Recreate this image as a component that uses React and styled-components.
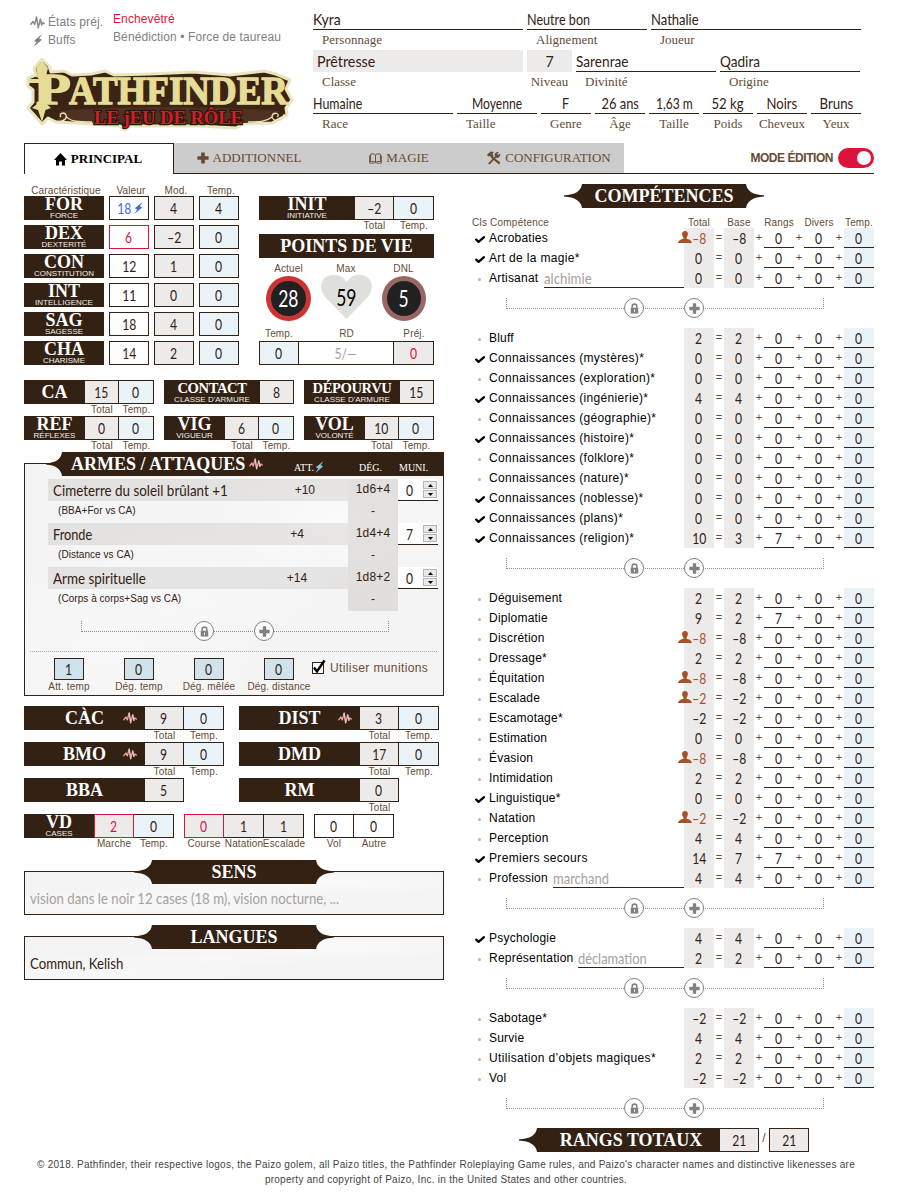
import React, { useLayoutEffect, useRef } from 'react';
import styled, { createGlobalStyle, css } from 'styled-components';

const INK = '#332113';
const LABEL = '#664b35';
const GREY = '#edebea';
const BLUE = '#eaf3f7';
const RED = '#dc143c';
const SANS = '"Liberation Sans", Arial, sans-serif';
const SERIF = '"Liberation Serif", "Times New Roman", serif';
const HAND = 'Lato, "Open Sans", sans-serif';

const Global = createGlobalStyle`
  *, *::before, *::after { box-sizing: border-box; }
  body { margin: 0; background: #fff; color: ${INK}; font-family: ${SANS}; font-size: 12px; }
`;

/* ---------- text squeezed to a given width ---------- */
const FitSpan = styled.span`
  display: inline-block;
  white-space: pre;
  flex: none;
  transform-origin: ${p => p.$origin} center;
`;
function Fit({ w, origin = 'left', children }) {
  const ref = useRef(null);
  useLayoutEffect(() => {
    const el = ref.current;
    if (el && el.offsetWidth) el.style.transform = `scaleX(${w / el.offsetWidth})`;
  }, [w, children]);
  return <FitSpan ref={ref} $origin={origin}>{children}</FitSpan>;
}

const Num = styled.span`
  display: inline-block;
  font-family: ${HAND};
  font-size: ${p => p.$size || 16}px;
  line-height: 1;
  white-space: nowrap;
  transform: scaleX(0.76);
  color: ${p => p.$color || 'inherit'};
`;

/* ---------- icons ---------- */
const Icon = styled.svg`
  display: block;
  flex: none;
  overflow: visible;
`;
const Pulse = ({ w = 15, h = 13, color = '#8a8a8a' }) => (
  <Icon width={w} height={h} viewBox="0 0 15 13" fill="none" stroke={color} strokeWidth="1.5" strokeLinejoin="round" strokeLinecap="round">
    <path d="M.8 8.3 L3 5.5 L4.6 8.5 L6.6 1 L8.2 11.8 L10.5 3 L11.7 9 L12.8 6.5 L14.3 7.6" />
  </Icon>
);
const PulsePink = () => (
  <Icon width="14" height="12" viewBox="0 0 15 13" fill="none" strokeLinejoin="round" strokeLinecap="round">
    <path d="M.8 8.3 L3 5.5 L4.6 8.5 L6.6 1 L8.2 11.8 L10.5 3 L11.7 9 L12.8 6.5 L14.3 7.6" stroke="#f0a594" strokeWidth="1.5" />
    <path d="M6.6 1.5 L8.2 11.2 M10.5 3.5 L11.7 9" stroke="#d5c4f2" strokeWidth="1" />
  </Icon>
);
const Bolt = ({ color, s = 12 }) => (
  <Icon width={s * 0.75} height={s} viewBox="0 0 9 13" fill={color}>
    <path d="M8.8 0 L1 6.6 L3.8 6.9 L0 13 L8 6.2 L5.2 5.6 Z" />
    <path d="M0.6 6.9 L5 4.3 L8.6 5.6 L4 8.4 Z" />
  </Icon>
);
const Home = () => (
  <Icon width="13" height="13" viewBox="0 0 13 13" fill="#000">
    <path d="M6.5 0 L13 7 H11 V12.6 H7.9 V8.6 H5.1 V12.6 H2 V7 H0 Z" />
  </Icon>
);
const PlusMark = ({ s = 12, color }) => (
  <Icon width={s} height={s} viewBox="0 0 12 12" fill={color}>
    <path d="M4.2 .4 H7.8 V4.2 H11.6 V7.8 H7.8 V11.6 H4.2 V7.8 H.4 V4.2 H4.2 Z" />
  </Icon>
);
const Book = () => (
  <Icon width="13" height="11" viewBox="0 0 13 11" fill="none" stroke={LABEL} strokeWidth="1">
    <path d="M6.5 2 C5 .6 2.8 .6 1.6 1.2 V8.8 C3 8.2 5 8.4 6.5 9.6 C8 8.4 10 8.2 11.4 8.8 V1.2 C10.2 .6 8 .6 6.5 2 Z M6.5 2 V9.6" />
    <path d="M.5 2.5 V10.2 H5.6 M12.5 2.5 V10.2 H7.4" strokeWidth=".8" />
  </Icon>
);
const Tools = () => (
  <Icon width="14" height="14" viewBox="0 0 14 14" fill={LABEL}>
    <path d="M1 12.6 L8.2 5 L9.4 6.2 L2.6 13.6 Z" />
    <path d="M7.4 3.6 C8 1.4 10 .6 12 1 L10.2 3 L11.2 4 L13.2 2.4 C13.8 5 11.6 7.4 9.2 6.8 Z" />
    <path d="M5.4 5.4 L13.4 11.6 L12 13.4 L4.2 6.8 Z" />
    <path d="M0 3.8 L3.6 .4 L7 1 L5.4 2.4 L6.6 5 L4.4 7.4 L3.2 5 L1.4 5.6 Z" />
  </Icon>
);
const Person = () => (
  <Icon width="14" height="12" viewBox="0 0 14 12" fill="#a5522a">
    <path d="M7 0 C9 0 10.1 1.3 9.9 3.3 C9.8 4.9 9 6 8.5 6.5 V7.8 C10.6 8.5 13.6 9 13.9 12 H.1 C.4 9 3.4 8.5 5.5 7.8 V6.5 C5 6 4.2 4.9 4.1 3.3 C3.9 1.3 5 0 7 0 Z" />
  </Icon>
);
const Check = () => (
  <Icon width="10" height="8" viewBox="0 0 10 8" fill="none" stroke="#000" strokeWidth="2.3" strokeLinecap="round" strokeLinejoin="round">
    <path d="M1.2 4.6 L3.6 6.8 L9 2.2" />
  </Icon>
);
const Lock = () => (
  <Icon width="9" height="11" viewBox="0 0 10 12">
    <path d="M2.4 6 V3.4 C2.4 .4 7.6 .4 7.6 3.4 V6" fill="none" stroke="#808080" strokeWidth="1.7" />
    <path d="M.8 5.2 H9.2 V11.6 H.8 Z" fill="#808080" />
    <path d="M4.5 7 H5.5 V10 H4.5 Z" fill="#fff" />
  </Icon>
);
const Heart = styled.svg`
  display: block;
  grid-area: 1 / 1;
`;

/* ---------- header ---------- */
const Sheet = styled.main`
  width: 900px;
  height: 1200px;
  padding: 8px 26px 0 24px;
  overflow: hidden;
`;
const Header = styled.header`
  display: flex;
  height: 135px;
`;
const Brand = styled.div`
  width: 289px;
  flex: none;
`;
const Status = styled.div`
  display: flex;
  height: 44px;
  padding: 2px 0 0 6px;
  color: #808080;
`;
const StatusKeys = styled.div`
  width: 83px;
  padding-top: 3px;
`;
const StatusKey = styled.div`
  display: flex;
  align-items: center;
  gap: 3px;
  height: 18px;
  letter-spacing: 0.1px;
`;
const KeyIcon = styled.span`
  display: flex;
  justify-content: center;
  width: 15px;
`;
const StatusLine = styled.div`
  height: 18px;
  line-height: 18px;
  white-space: nowrap;
  letter-spacing: 0.1px;
  color: ${p => (p.$bad ? RED : '#808080')};
`;
const Logo = styled.svg`
  display: block;
  margin: 4px 0 0 0;
  overflow: visible;
`;
const LogoLetters = styled.g`
  font-family: ${SERIF};
  font-weight: bold;
  fill: #e5dc96;
  stroke: #e5dc96;
  stroke-width: 1.3px;
`;
const LogoSubtitle = styled.text`
  font-family: ${SERIF};
  font-weight: bold;
  font-size: 19px;
  fill: #cf2027;
  stroke: #2b150c;
  stroke-width: 2.4px;
  paint-order: stroke;
`;

const Identity = styled.div`
  flex: 1;
`;
const FieldRow = styled.div`
  display: flex;
  gap: 4px;
  height: 42px;
`;
const Field = styled.div`
  width: ${p => p.$w}px;
  flex: none;
  text-align: ${p => (p.$center ? 'center' : 'left')};
`;
const FieldValue = styled.div`
  display: flex;
  align-items: center;
  justify-content: ${p => (p.$center ? 'center' : 'flex-start')};
  height: 22px;
  padding: 1px 0 0 ${p => (p.$filled && !p.$center ? 4 : 0)}px;
  font-family: ${HAND};
  font-size: 16px;
  line-height: 20px;
  white-space: nowrap;
  ${p => (p.$filled
    ? css`background: ${GREY}; padding-top: 0; padding-bottom: 1px;`
    : css`border-bottom: 1px solid ${INK};`)}
`;
const FieldLabel = styled.div`
  height: 20px;
  line-height: 20px;
  padding-left: ${p => (p.$center ? 0 : 9)}px;
  font-family: ${SERIF};
  font-size: 13px;
  color: ${LABEL};
`;

/* ---------- tabs ---------- */
const TabBar = styled.nav`
  display: flex;
  height: 31px;
  border-bottom: 1px solid ${INK};
`;
const Tab = styled.div`
  display: flex;
  align-items: center;
  justify-content: center;
  gap: 4px;
  width: 150px;
  height: 31px;
  font-family: ${SERIF};
  font-size: 13px;
  ${p => (p.$active
    ? css`background: #fff; color: #000; font-weight: bold; border: 1px solid ${INK}; border-bottom: 0; padding-right: 2px;`
    : css`background: #ccc; color: ${LABEL}; border-bottom: 1px solid ${INK};`)}
`;
const EditMode = styled.div`
  display: flex;
  align-items: center;
  gap: 5px;
  height: 30px;
  margin-left: auto;
  font-size: 12px;
  font-weight: bold;
  letter-spacing: -0.45px;
  color: ${LABEL};
`;
const Toggle = styled.span`
  display: flex;
  justify-content: flex-end;
  width: 36px;
  height: 20px;
  padding: 3px;
  border-radius: 10px;
  background: ${RED};
`;
const Knob = styled.span`
  width: 14px;
  height: 14px;
  border-radius: 50%;
  background: #fff;
`;

/* ---------- boxes ---------- */
const Columns = styled.div`
  display: flex;
  height: 978px;
`;
const LeftCol = styled.div`
  width: 420px;
  flex: none;
`;
const Caption = styled.div`
  width: ${p => p.$w}px;
  flex: none;
  height: 12px;
  line-height: 12px;
  display: flex;
  justify-content: center;
  font-size: 10px;
  letter-spacing: 0.15px;
  white-space: nowrap;
  color: ${LABEL};
`;
const Cell = styled.div`
  display: flex;
  align-items: center;
  justify-content: center;
  width: ${p => p.$w}px;
  height: 24px;
  flex: none;
  border: 1px solid ${p => (p.$bad ? RED : INK)};
  border-left-width: ${p => (p.$first || p.$bad ? 1 : 0)}px;
  background: ${p => ({ grey: GREY, blue: BLUE })[p.$tone] || '#fff'};
  color: ${p => (p.$bad || p.$red ? RED : p.$dim ? '#a8a19c' : INK)};
`;
const Title = styled.div`
  position: relative;
  display: flex;
  flex-direction: column;
  align-items: center;
  justify-content: ${p => (p.$sub ? 'flex-start' : 'center')};
  flex: ${p => (p.$w ? 'none' : 1)};
  width: ${p => (p.$w ? `${p.$w}px` : 'auto')};
  height: 24px;
  padding-left: ${p => p.$shift || 0}px;
  background: ${INK};
  color: #fff;
  font-family: ${SERIF};
  font-weight: bold;
  font-size: ${p => p.$size || 18}px;
  letter-spacing: ${p => (p.$size ? -0.4 : 0)}px;
  line-height: ${p => (p.$sub ? 16 : 24)}px;
  white-space: nowrap;
`;
const Sub = styled.span`
  font: 8px/7px ${SANS};
  letter-spacing: 0;
  color: #eee;
`;
const TitlePulse = styled.span`
  position: absolute;
  right: 8px;
  top: 6px;
`;
const Line = styled.div`
  display: flex;
`;
const StatBox = styled.div`
  width: ${p => p.$w}px;
  flex: none;
`;
const Captions = styled.div`
  display: flex;
  justify-content: flex-end;
  height: 12px;
`;
const StatRow = styled.div`
  display: flex;
  gap: ${p => p.$gap}px;
  height: 36px;
`;

function Stat({ w, title, sub, size, pulse, cells, first }) {
  return (
    <StatBox $w={w}>
      <Line>
        {title && (
          <Title $sub={sub} $size={size}>
            {title}
            {sub && <Sub>{sub}</Sub>}
            {pulse && <TitlePulse><PulsePink /></TitlePulse>}
          </Title>
        )}
        {cells.map((c, i) => (
          <Cell key={i} $w={c.w} $tone={c.tone} $bad={c.bad} $first={first && i === 0}>
            <Num>{c.v}</Num>
          </Cell>
        ))}
      </Line>
      <Captions>
        {cells.map((c, i) => <Caption key={i} $w={c.w}>{c.label}</Caption>)}
      </Captions>
    </StatBox>
  );
}

/* ---------- abilities and hit points ---------- */
const TopBlock = styled.div`
  display: flex;
  gap: 20px;
  height: 206px;
  padding-top: 10px;
`;
const Abilities = styled.div`
  width: 215px;
`;
const AbilityRow = styled.div`
  display: flex;
  gap: 5px;
  height: ${p => (p.$head ? 12 : 29)}px;
  ${p => p.$head && css`padding: 1px 0 0 2px;`}
`;
const Vitals = styled.div`
  width: 175px;
  padding-top: 12px;
`;
const HpTitle = styled(Title)`
  margin-top: 2px;
`;
const HpCaptions = styled.div`
  display: flex;
  justify-content: space-between;
  padding: ${p => p.$pad};
`;
const Gauges = styled.div`
  display: flex;
  gap: 10px;
  height: 51px;
  padding: 0 8px 0 7px;
`;
const Disc = styled.div`
  display: flex;
  align-items: center;
  justify-content: center;
  width: 45px;
  height: 45px;
  margin-top: 1px;
  border: 5px solid ${p => p.$ring};
  border-radius: 50%;
  background: #212121;
  color: #fff;
`;
const HeartBox = styled.div`
  display: grid;
  place-items: center;
  width: 51px;
  height: 44px;
  color: #000;
`;
const HeartValue = styled.div`
  grid-area: 1 / 1;
`;

const ABILITIES = [
  ['FOR', 'FORCE', '18', '4', '4'],
  ['DEX', 'DEXTERITÉ', '6', '-2', '0'],
  ['CON', 'CONSTITUTION', '12', '1', '0'],
  ['INT', 'INTELLIGENCE', '11', '0', '0'],
  ['SAG', 'SAGESSE', '18', '4', '0'],
  ['CHA', 'CHARISME', '14', '2', '0'],
];
const minus = s => s.replace('-', '–');

/* ---------- weapons ---------- */
const paper = css`
  background:
    radial-gradient(ellipse at 20% 80%, rgba(255,255,255,.4), transparent 35%),
    radial-gradient(ellipse at 75% 25%, rgba(255,255,255,.6), transparent 30%),
    radial-gradient(ellipse at 45% 50%, rgba(255,255,255,.4), transparent 40%),
    #f4f4f4;
`;
const WeaponWrap = styled.section`
  height: 244px;
  margin-bottom: 10px;
`;
const WeaponHead = styled.div`
  position: relative;
  z-index: 1;
  display: flex;
  height: 24px;
  padding-left: 22px;
`;
const Point = styled.svg`
  display: block;
  flex: none;
`;
const WeaponBar = styled.div`
  display: flex;
  flex: 1;
  align-items: center;
  padding-left: 9px;
  background: ${INK};
  color: #fff;
  font-family: ${SERIF};
`;
const WeaponTitle = styled.span`
  display: flex;
  align-items: center;
  gap: 4px;
  width: 223px;
  font-size: 18px;
  font-weight: bold;
  white-space: nowrap;
`;
const WeaponCol = styled.span`
  display: flex;
  align-items: center;
  gap: 1px;
  width: ${p => p.$w}px;
  padding-top: 6px;
  font-size: 10px;
`;
const Panel = styled.div`
  ${paper}
  border: 1px solid ${INK};
  height: ${p => p.$h}px;
  margin-top: -13px;
  padding: ${p => p.$pad};
`;
const Weapon = styled.div`
  display: grid;
  grid-template-columns: 300px 50px 40px;
  grid-template-rows: 22px 22px;
  margin-left: 23px;
`;
const WeaponName = styled.div`
  display: flex;
  align-items: center;
  justify-content: space-between;
  padding-left: 5px;
  background: rgba(80, 65, 50, .1);
  font-family: ${HAND};
  font-size: 16px;
  line-height: 20px;
`;
const Attack = styled.span`
  width: 102px;
  text-align: center;
  font: 12px ${SANS};
  line-height: 20px;
`;
const Damage = styled.div`
  background: rgba(80, 65, 50, .12);
  text-align: center;
  font-size: 12px;
  letter-spacing: 0.15px;
  line-height: 20px;
`;
const Target = styled.div`
  padding-left: 10px;
  font-size: 10px;
  line-height: 20px;
  letter-spacing: 0.05px;
`;
const Ammo = styled.div`
  display: flex;
  align-items: center;
  justify-content: space-between;
  padding: 0 1px 0 7px;
  background: #fff;
  border-bottom: 1px solid ${INK};
`;
const Spinner = styled.div`
  display: grid;
  gap: 1px;
  width: 14px;
`;
const SpinButton = styled.span`
  display: grid;
  place-items: center;
  height: 8px;
  background: #e9e9e9;
  border: 1px solid #b5b5b5;
`;
const Spin = () => (
  <Spinner>
    <SpinButton><Icon width="5" height="3" viewBox="0 0 5 3"><path d="M0 3 L2.5 0 L5 3 Z" /></Icon></SpinButton>
    <SpinButton><Icon width="5" height="3" viewBox="0 0 5 3"><path d="M0 0 L2.5 3 L5 0 Z" /></Icon></SpinButton>
  </Spinner>
);
const Separator = styled.div`
  display: flex;
  height: 40px;
  padding: 10px 0 0 ${p => p.$left}px;
`;
const Bracket = styled.div`
  display: flex;
  gap: 40px;
  width: ${p => p.$w}px;
  height: 11px;
  padding-left: ${p => p.$pad}px;
  border: 1px dotted #9b8a7c;
  border-top: 0;
`;
const Round = styled.span`
  display: flex;
  align-items: center;
  justify-content: center;
  width: 20px;
  height: 20px;
  border: 1px solid #808080;
  border-radius: 50%;
  background: #fff;
`;
const Controls = ({ left, w, pad }) => (
  <Separator $left={left}>
    <Bracket $w={w} $pad={pad}>
      <Round><Lock /></Round>
      <Round><PlusMark s={11} color="#808080" /></Round>
    </Bracket>
  </Separator>
);
const Options = styled.div`
  display: flex;
  margin: 0 6px 0 5px;
  padding-top: 6px;
  border-top: 1px dotted #b0a79e;
`;
const Bonus = styled.div`
  display: flex;
  flex-direction: column;
  align-items: center;
  gap: 1px;
  width: 70px;
  margin-left: ${p => (p.$first ? 4 : 0)}px;
`;
const BonusCell = styled.div`
  display: flex;
  align-items: center;
  justify-content: center;
  width: 30px;
  height: 22px;
  background: #d0e2eb;
  border: 1px solid ${INK};
`;
const UseAmmo = styled.div`
  display: flex;
  gap: 6px;
  height: 20px;
  align-items: center;
  margin-left: -2px;
  font-size: 12px;
  letter-spacing: 0.38px;
  color: ${LABEL};
  white-space: nowrap;
`;
const Box = styled.span`
  width: 12px;
  height: 12px;
  border: 1px solid ${INK};
  background: #fff;
`;

/* ---------- banners ---------- */
const NotesStack = styled.div`
  padding-top: 10px;
`;
const Notes = styled.section`
  height: 65px;
`;
const Banner = styled.div`
  position: relative;
  display: flex;
  justify-content: center;
  height: 24px;
`;
const Note = styled.div`
  display: flex;
  align-items: center;
  height: 41px;
  padding-top: 3px;
  font-family: ${HAND};
  font-size: 16px;
  line-height: 20px;
  color: ${p => (p.$dim ? '#a8a19c' : INK)};
`;
const LeftPoint = ({ w = 18 }) => (
  <Point width={w} height="24" viewBox="0 0 18 24" preserveAspectRatio="none" fill={INK}>
    <path d="M18 0 C17 7 11 11 0 11.2 V12.4 C11 13 17 17 18 24 Z" />
  </Point>
);
const RightPoint = ({ w = 18 }) => (
  <Point width={w} height="24" viewBox="0 0 18 24" preserveAspectRatio="none" fill={INK}>
    <path d="M0 0 C1 7 7 11 18 11.2 V12.4 C7 13 1 17 0 24 Z" />
  </Point>
);

/* ---------- skills ---------- */
const SkillCol = styled.div`
  width: 404px;
  margin-left: 26px;
  padding-top: 10px;
`;
const SkillBanner = styled(Banner)`
  margin-left: 24px;
  width: 380px;
  justify-content: flex-start;
  padding-left: 70px;
`;
const SkillHead = styled.div`
  display: flex;
  height: 20px;
  padding: 9px 0 0 2px;
`;
const HeadName = styled.div`
  width: 212px;
  flex: none;
  font-size: 10px;
  line-height: 12px;
  letter-spacing: 0.22px;
  color: ${LABEL};
`;
const HeadCaption = styled(Caption)`
  margin-right: 10px;
`;
const SkillRow = styled.div`
  display: flex;
  height: 20px;
`;
const ClassMark = styled.div`
  display: flex;
  align-items: center;
  justify-content: center;
  width: 19px;
  padding-top: 2px;
  flex: none;
`;
const Dot = styled.span`
  width: 3px;
  height: 3px;
  margin-right: 1px;
  border-radius: 50%;
  background: #b8b8b8;
`;
const SkillName = styled.div`
  flex: none;
  line-height: 20px;
  color: #000;
  white-space: nowrap;
  letter-spacing: ${p => (p.$long ? 0.34 : 0.22)}px;
`;
const Speciality = styled.div`
  display: flex;
  align-items: center;
  flex: 1;
  margin-left: ${p => p.$gap}px;
  border-bottom: 1px solid ${INK};
  font-family: ${HAND};
  font-size: 16px;
  line-height: 18px;
  color: #a8a19c;
`;
const Values = styled.div`
  display: flex;
  width: 190px;
  margin-left: auto;
  flex: none;
`;
const Value = styled.div`
  position: relative;
  display: flex;
  align-items: center;
  justify-content: center;
  width: 30px;
  height: 20px;
  background: ${p => ({ grey: GREY, blue: BLUE })[p.$tone] || 'transparent'};
  border-bottom: 1px solid ${p => (p.$line ? INK : 'transparent')};
  color: ${p => (p.$penalty ? '#a5522a' : INK)};
`;
const PenaltyMark = styled.span`
  position: absolute;
  left: -6px;
  top: 3px;
`;
const Op = styled.span`
  width: 10px;
  text-align: center;
  font-size: 11px;
  line-height: 19px;
  color: ${LABEL};
`;

// [name, class skill, total, base, ranks, armour penalty, speciality, gap, width]
const GROUPS = [
  [
    ['Acrobaties', 1, '-8', '-8', '0', 1],
    ['Art de la magie*', 1, '0', '0', '0'],
    ['Artisanat', 0, '0', '0', '0', 0, 'alchimie', 6, 48],
  ],
  [
    ['Bluff', 0, '2', '2', '0'],
    ['Connaissances (mystères)*', 1, '0', '0', '0'],
    ['Connaissances (exploration)*', 0, '0', '0', '0'],
    ['Connaissances (ingénierie)*', 1, '4', '4', '0'],
    ['Connaissances (géographie)*', 0, '0', '0', '0'],
    ['Connaissances (histoire)*', 1, '0', '0', '0'],
    ['Connaissances (folklore)*', 0, '0', '0', '0'],
    ['Connaissances (nature)*', 0, '0', '0', '0'],
    ['Connaissances (noblesse)*', 1, '0', '0', '0'],
    ['Connaissances (plans)*', 1, '0', '0', '0'],
    ['Connaissances (religion)*', 1, '10', '3', '7'],
  ],
  [
    ['Déguisement', 0, '2', '2', '0'],
    ['Diplomatie', 0, '9', '2', '7'],
    ['Discrétion', 0, '-8', '-8', '0', 1],
    ['Dressage*', 0, '2', '2', '0'],
    ['Équitation', 0, '-8', '-8', '0', 1],
    ['Escalade', 0, '-2', '-2', '0', 1],
    ['Escamotage*', 0, '-2', '-2', '0'],
    ['Estimation', 0, '0', '0', '0'],
    ['Évasion', 0, '-8', '-8', '0', 1],
    ['Intimidation', 0, '2', '2', '0'],
    ['Linguistique*', 1, '0', '0', '0'],
    ['Natation', 0, '-2', '-2', '0', 1],
    ['Perception', 0, '4', '4', '0'],
    ['Premiers secours', 1, '14', '7', '7'],
    ['Profession', 0, '4', '4', '0', 0, 'marchand', 5, 56],
  ],
  [
    ['Psychologie', 1, '4', '4', '0'],
    ['Représentation', 0, '2', '2', '0', 0, 'déclamation', 5, 69],
  ],
  [
    ['Sabotage*', 0, '-2', '-2', '0'],
    ['Survie', 0, '4', '4', '0'],
    ['Utilisation d’objets magiques*', 0, '2', '2', '0'],
    ['Vol', 0, '-2', '-2', '0'],
  ],
];

function Skill({ data }) {
  const [name, cls, total, base, ranks, penalty, spec, gap, specW] = data;
  return (
    <SkillRow>
      <ClassMark>{cls ? <Check /> : <Dot />}</ClassMark>
      <SkillName $long={name.length > 15}>{name}</SkillName>
      {spec && <Speciality $gap={gap}><Fit w={specW}>{spec}</Fit></Speciality>}
      <Values>
        <Value $tone="grey" $penalty={penalty}>
          {penalty ? <PenaltyMark><Person /></PenaltyMark> : null}
          <Num>{minus(total)}</Num>
        </Value>
        <Op>=</Op>
        <Value $tone="grey"><Num>{minus(base)}</Num></Value>
        <Op>+</Op>
        <Value $line><Num>{ranks}</Num></Value>
        <Op>+</Op>
        <Value $line><Num>0</Num></Value>
        <Op>+</Op>
        <Value $line $tone="blue"><Num>0</Num></Value>
      </Values>
    </SkillRow>
  );
}

const Totals = styled.div`
  display: flex;
  margin-left: 49px;
`;
const Slash = styled.span`
  width: 10px;
  text-align: center;
  line-height: 20px;
  color: ${LABEL};
`;
const Footer = styled.footer`
  width: 844px;
  padding-top: 5px;
  text-align: center;
  font-size: 10px;
  line-height: 15px;
  letter-spacing: 0.265px;
  white-space: nowrap;
  color: #444;
`;

// [value, label, field width, text width, alignment (1 all centred, 2 value centred), filled]
const ID_ROWS = [
  [['Kyra', 'Personnage', 210, 28], ['Neutre bon', 'Alignement', 120, 63], ['Nathalie', 'Joueur', 210, 48]],
  [['Prêtresse', 'Classe', 210, 58, 0, 1], ['7', 'Niveau', 45, 8, 1, 1], ['Sarenrae', 'Divinité', 140, 53], ['Qadira', 'Origine', 140, 40]],
  [['Humaine', 'Race', 140, 49], ['Moyenne', 'Taille', 80, 50, 2], ['F', 'Genre', 50, 7, 1], ['26 ans', 'Âge', 50, 37, 1], ['1,63 m', 'Taille', 50, 37, 1], ['52 kg', 'Poids', 50, 32, 1], ['Noirs', 'Cheveux', 50, 31, 1], ['Bruns', 'Yeux', 50, 34, 1]],
];

const WEAPONS = [
  ['Cimeterre du soleil brûlant +1', 175, '+10', '1d6+4', '0', '(BBA+For vs CA)'],
  ['Fronde', 39, '+4', '1d4+4', '7', '(Distance vs CA)'],
  ['Arme spirituelle', 93, '+14', '1d8+2', '0', '(Corps à corps+Sag vs CA)'],
];

function GameLogo() {
  return (
    <Logo width="270" height="76" viewBox="24 57 270 76">
      <path
        d="M42 60 L49 67 L51 73 L64 72 L72 76 L91 75 L105 72 L114 76 L150 75 L193 73 L230 76 L264 72 L276 75 L290 81 L286 90 L292 101 L286 109 L287 116 L272 124 L243 125 L236 129 L200 127 L130 127 L125 131 L120 127 L92 125 L56 123 L48 119 L42 125 L35 117 L28 109 L33 103 L33 91 L28 87 L28 79 L36 76 L34 69 Z"
        fill="#3c2415" stroke="#e9e6bd" strokeWidth="3" strokeLinejoin="round"
      />
      <path d="M60 112 C110 107 220 107 280 112 L270 121 L236 125 L92 123 L58 121 Z" fill="#4f3022" />
      <g fill="none" stroke="#e9e6bd" strokeWidth="1.3">
        <path d="M52 121 C58 124 68 122 66 116 C64 112 58 115 61 118 M66 117 C70 123 80 123 92 123" />
        <path d="M284 115 C284 123 272 124 272 117 C274 112 281 115 277 118 M272 118 C266 123 258 123 248 123" />
      </g>
      <LogoLetters>
        <text x="36" y="105" fontSize="45" textLength="35" lengthAdjust="spacingAndGlyphs">P</text>
        <text x="69" y="105" fontSize="41" textLength="219" lengthAdjust="spacingAndGlyphs">ATHFINDER</text>
      </LogoLetters>
      <path d="M42 62 L48 69 L45.5 79 V104 L51 109 L45.5 111 L42 123 L38 111 L32 109 L38.5 104 V84 H29 V80 H38.5 L36 69 Z" fill="#e5dc96" />
      <LogoSubtitle x="94" y="125" textLength="149" lengthAdjust="spacingAndGlyphs">LE jEU DE RÔLE</LogoSubtitle>
    </Logo>
  );
}

export default function App() {
  const tt = (a, b, w1 = 39, w2 = 40) => [
    { v: a, w: w1, tone: 'grey', label: 'Total' },
    { v: b, w: w2, tone: 'blue', label: 'Temp.' },
  ];
  return (
    <Sheet>
      <Global />
      <Header>
        <Brand>
          <Status>
            <StatusKeys>
              <StatusKey><Pulse />États préj.</StatusKey>
              <StatusKey><KeyIcon><Bolt color="#808080" s={13} /></KeyIcon>Buffs</StatusKey>
            </StatusKeys>
            <div>
              <StatusLine $bad>Enchevêtré</StatusLine>
              <StatusLine>Bénédiction • Force de taureau</StatusLine>
            </div>
          </Status>
          <GameLogo />
        </Brand>
        <Identity>
          {ID_ROWS.map((row, r) => (
            <FieldRow key={r}>
              {row.map(([v, label, w, tw, center, filled], i) => (
                <Field key={i} $w={w} $center={center === 1}>
                  <FieldValue $center={center} $filled={filled}>
                    <Fit w={tw} origin={center ? 'center' : 'left'}>{v}</Fit>
                  </FieldValue>
                  <FieldLabel $center={center === 1}>{label}</FieldLabel>
                </Field>
              ))}
            </FieldRow>
          ))}
        </Identity>
      </Header>

      <TabBar>
        <Tab $active><Home />PRINCIPAL</Tab>
        <Tab><PlusMark s={12} color={LABEL} />ADDITIONNEL</Tab>
        <Tab><Book />MAGIE</Tab>
        <Tab><Tools />CONFIGURATION</Tab>
        <EditMode>MODE ÉDITION<Toggle><Knob /></Toggle></EditMode>
      </TabBar>

      <Columns>
        <LeftCol>
          <TopBlock>
            <Abilities>
              <AbilityRow $head>
                <Caption $w={80}>Caractéristique</Caption>
                <Caption $w={40}>Valeur</Caption>
                <Caption $w={40}>Mod.</Caption>
                <Caption $w={40}>Temp.</Caption>
              </AbilityRow>
              {ABILITIES.map(([n, sub, v, m, t], i) => (
                <AbilityRow key={n}>
                  <Title $w={80} $sub>{n}<Sub>{sub}</Sub></Title>
                  <Cell $w={40} $first $bad={i === 1}>
                    <Num $color={i === 0 ? '#4169e1' : undefined}>{v}</Num>
                    {i === 0 && <Bolt color="#4169e1" s={12} />}
                  </Cell>
                  <Cell $w={40} $first $tone="grey"><Num>{minus(m)}</Num></Cell>
                  <Cell $w={40} $first $tone="blue"><Num>{t}</Num></Cell>
                </AbilityRow>
              ))}
            </Abilities>
            <Vitals>
              <Stat w={175} title="INIT" sub="INITIATIVE" cells={tt('–2', '0')} />
              <HpTitle>POINTS DE VIE</HpTitle>
              <HpCaptions $pad="5px 8px 0 7px">
                <Caption $w={45}>Actuel</Caption>
                <Caption $w={51}>Max</Caption>
                <Caption $w={45}>DNL</Caption>
              </HpCaptions>
              <Gauges>
                <Disc $ring="#cc3333"><Num $size={23}>28</Num></Disc>
                <HeartBox>
                  <Heart width="51" height="44" viewBox="0 0 51 44" fill="#dfdfdb">
                    <path d="M25.5 44 L5 23 C-2 15 -1 4 7 1 C14 -2 22 1 25.5 7 C29 1 37 -2 44 1 C52 4 53 15 46 23 Z" />
                  </Heart>
                  <HeartValue><Num $size={23}>59</Num></HeartValue>
                </HeartBox>
                <Disc $ring="#996666"><Num $size={23}>5</Num></Disc>
              </Gauges>
              <HpCaptions $pad="2px 0 1px">
                <Caption $w={40}>Temp.</Caption>
                <Caption $w={95}>RD</Caption>
                <Caption $w={40}>Préj.</Caption>
              </HpCaptions>
              <Line>
                <Cell $w={40} $first $tone="blue"><Num>0</Num></Cell>
                <Cell $w={95} $dim><Num>5/—</Num></Cell>
                <Cell $w={40} $tone="grey" $red><Num>0</Num></Cell>
              </Line>
            </Vitals>
          </TopBlock>

          <StatRow $gap={10}>
            <Stat w={130} title="CA" cells={tt('15', '0', 34, 35)} />
            <Stat w={130} title="CONTACT" sub="CLASSE D'ARMURE" size={14.6} cells={[{ v: '8', w: 34, tone: 'grey' }]} />
            <Stat w={130} title="DÉPOURVU" sub="CLASSE D'ARMURE" size={14.6} cells={[{ v: '15', w: 34, tone: 'grey' }]} />
          </StatRow>
          <StatRow $gap={10}>
            <Stat w={130} title="RÉF" sub="RÉFLEXES" cells={tt('0', '0', 34, 35)} />
            <Stat w={130} title="VIG" sub="VIGUEUR" cells={tt('6', '0', 34, 35)} />
            <Stat w={130} title="VOL" sub="VOLONTÉ" cells={tt('10', '0', 34, 35)} />
          </StatRow>

          <WeaponWrap>
            <WeaponHead>
              <LeftPoint w={16} />
              <WeaponBar>
                <WeaponTitle>ARMES / ATTAQUES<PulsePink /></WeaponTitle>
                <WeaponCol $w={65}>ATT.<Bolt color="#7fc4d8" s={12} /></WeaponCol>
                <WeaponCol $w={40}>DÉG.</WeaponCol>
                <WeaponCol $w={40}>MUNI.</WeaponCol>
              </WeaponBar>
            </WeaponHead>
            <Panel $h={233} $pad="15px 0 0 0">
              {WEAPONS.map(([n, w, att, dmg, ammo, target]) => (
                <Weapon key={n}>
                  <WeaponName><Fit w={w}>{n}</Fit><Attack>{att}</Attack></WeaponName>
                  <Damage>{dmg}</Damage>
                  <Ammo><Num>{ammo}</Num><Spin /></Ammo>
                  <Target>{target}</Target>
                  <Damage>-</Damage>
                </Weapon>
              ))}
              <Controls left={56} w={308} pad={112} />
              <Options>
                {[['1', 'Att. temp'], ['0', 'Dég. temp'], ['0', 'Dég. mêlée'], ['0', 'Dég. distance']].map(([v, l], i) => (
                  <Bonus key={l} $first={i === 0}>
                    <BonusCell><Num>{v}</Num></BonusCell>
                    <Caption $w={70}>{l}</Caption>
                  </Bonus>
                ))}
                <UseAmmo>
                  <Box>
                    <Icon width="14" height="14" viewBox="0 0 14 14" fill="none" stroke="#000" strokeWidth="2.4">
                      <path d="M1 4.5 L4 8.5 L11.5 -2.5" />
                    </Icon>
                  </Box>
                  Utiliser munitions
                </UseAmmo>
              </Options>
            </Panel>
          </WeaponWrap>

          <StatRow $gap={15}>
            <Stat w={200} title="CÀC" pulse cells={tt('9', '0')} />
            <Stat w={200} title="DIST" pulse cells={tt('3', '0')} />
          </StatRow>
          <StatRow $gap={15}>
            <Stat w={200} title="BMO" pulse cells={tt('9', '0')} />
            <Stat w={200} title="DMD" cells={tt('17', '0')} />
          </StatRow>
          <StatRow $gap={55}>
            <Stat w={160} title="BBA" cells={[{ v: '5', w: 39, tone: 'grey' }]} />
            <Stat w={160} title="RM" cells={[{ v: '0', w: 39, tone: 'grey', label: 'Total' }]} />
          </StatRow>
          <StatRow $gap={10}>
            <Stat w={150} title="VD" sub="CASES" cells={[{ v: '2', w: 40, tone: 'grey', bad: true, label: 'Marche' }, { v: '0', w: 40, tone: 'blue', label: 'Temp.' }]} />
            <Stat w={120} first cells={[{ v: '0', w: 40, tone: 'grey', bad: true, label: 'Course' }, { v: '1', w: 40, tone: 'grey', label: 'Natation' }, { v: '1', w: 40, tone: 'grey', label: 'Escalade' }]} />
            <Stat w={80} first cells={[{ v: '0', w: 40, label: 'Vol' }, { v: '0', w: 40, label: 'Autre' }]} />
          </StatRow>
          <NotesStack>
            <Notes>
              <Banner><LeftPoint /><Title $w={164}>SENS</Title><RightPoint /></Banner>
              <Panel $h={44} $pad="4px 0 0 5px">
                <Note $dim><Fit w={309}>vision dans le noir 12 cases (18 m), vision nocturne, ...</Fit></Note>
              </Panel>
            </Notes>
            <Notes>
              <Banner><LeftPoint /><Title $w={164}>LANGUES</Title><RightPoint /></Banner>
              <Panel $h={44} $pad="4px 0 0 5px">
                <Note><Fit w={93}>Commun, Kelish</Fit></Note>
              </Panel>
            </Notes>
          </NotesStack>
        </LeftCol>

        <SkillCol>
          <SkillBanner><LeftPoint /><Title $w={164}>COMPÉTENCES</Title><RightPoint /></SkillBanner>
          <SkillHead>
            <HeadName>Cls Compétence</HeadName>
            {['Total', 'Base', 'Rangs', 'Divers', 'Temp.'].map(l => <HeadCaption key={l} $w={30}>{l}</HeadCaption>)}
          </SkillHead>
          {GROUPS.map((g, i) => (
            <React.Fragment key={i}>
              {g.map(s => <Skill key={s[0]} data={s} />)}
              <Controls left={36} w={318} pad={117} />
            </React.Fragment>
          ))}
          <Totals>
            <LeftPoint />
            <Title $w={183} $shift={5}>RANGS TOTAUX</Title>
            <Cell $w={39} $tone="grey"><Num>21</Num></Cell>
            <Slash>/</Slash>
            <Cell $w={40} $first $tone="grey"><Num>21</Num></Cell>
          </Totals>
        </SkillCol>
      </Columns>

      <Footer>
        © 2018. Pathfinder, their respective logos, the Paizo golem, all Paizo titles, the Pathfinder Roleplaying Game rules, and Paizo's character names and distinctive likenesses are<br />
        property and copyright of Paizo, Inc. in the United States and other countries.
      </Footer>
    </Sheet>
  );
}
